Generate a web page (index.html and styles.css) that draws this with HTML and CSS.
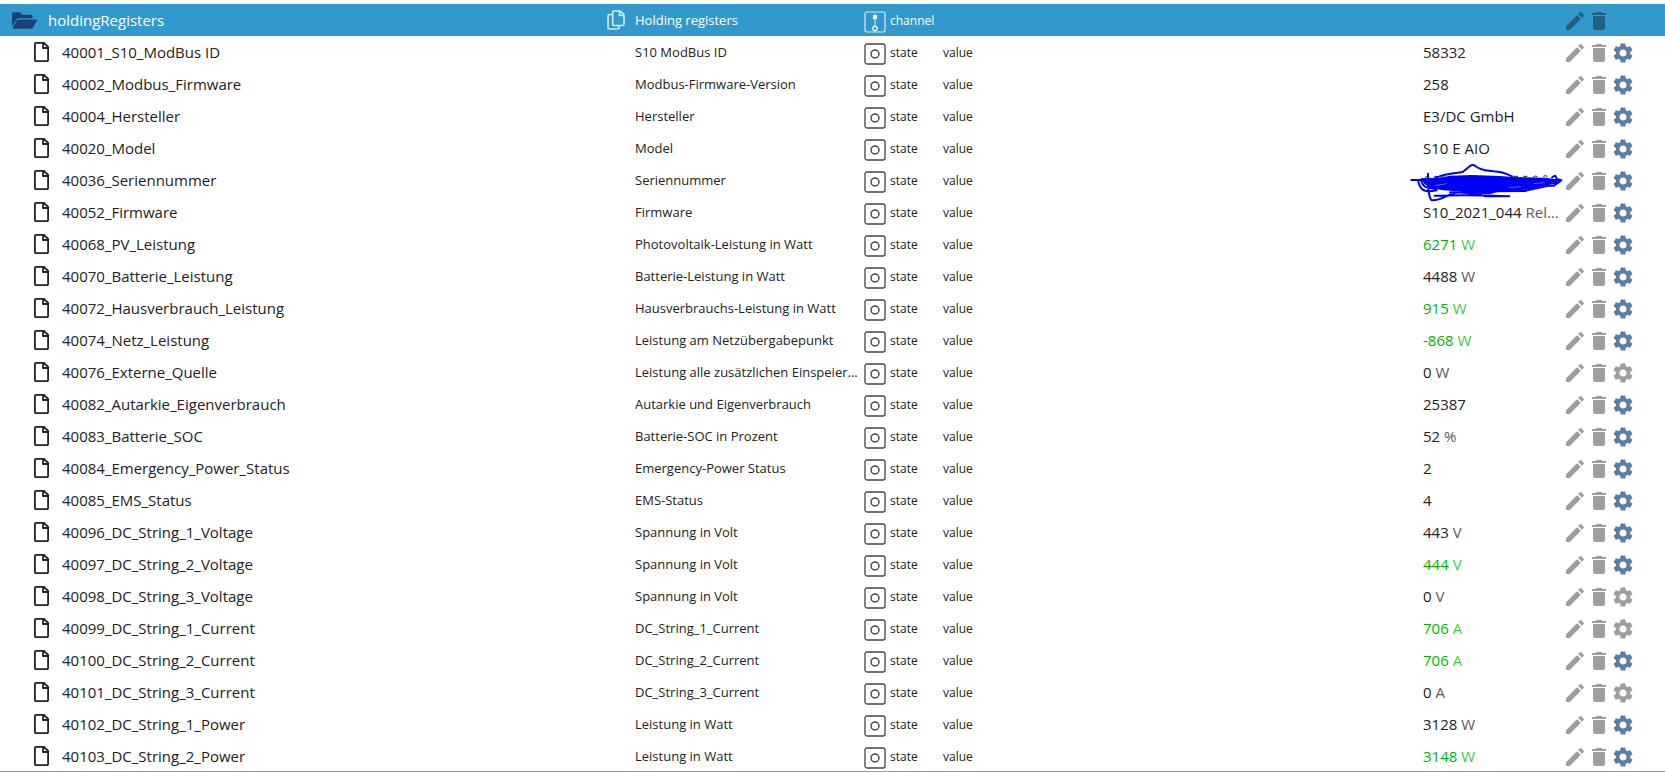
FILE: index.html
```html
<!DOCTYPE html>
<html lang="de">
<head>
<meta charset="utf-8">
<title>holdingRegisters</title>
<link rel="stylesheet" href="styles.css">
</head>
<body>
<svg class="sprite" aria-hidden="true">
  <symbol id="edit" viewBox="0 0 24 24"><path d="M3 17.25V21h3.75L17.81 9.94l-3.75-3.75L3 17.25zM20.71 7.04c.39-.39.39-1.02 0-1.41l-2.34-2.34a.9959.9959 0 0 0-1.41 0l-1.83 1.83 3.75 3.75 1.83-1.83z"/></symbol>
  <symbol id="trash" viewBox="0 0 24 24"><path d="M6 19c0 1.1.9 2 2 2h8c1.1 0 2-.9 2-2V7H6v12zM19 4h-3.5l-1-1h-5l-1 1H5v2h14V4z"/></symbol>
  <symbol id="gear" viewBox="0 0 24 24"><path d="M19.14 12.94c.04-.3.06-.61.06-.94 0-.32-.02-.64-.07-.94l2.03-1.58c.18-.14.23-.41.12-.61l-1.92-3.32c-.12-.22-.37-.29-.59-.22l-2.39.96c-.5-.38-1.03-.7-1.62-.94l-.36-2.54c-.04-.24-.24-.41-.48-.41h-3.84c-.24 0-.43.17-.47.41l-.36 2.54c-.59.24-1.13.57-1.62.94l-2.39-.96c-.22-.08-.47 0-.59.22L2.74 8.87c-.12.21-.08.47.12.61l2.03 1.58c-.05.3-.09.63-.09.94s.02.64.07.94l-2.03 1.58c-.18.14-.23.41-.12.61l1.92 3.32c.12.22.37.29.59.22l2.39-.96c.5.38 1.03.7 1.62.94l.36 2.54c.05.24.24.41.48.41h3.84c.24 0 .44-.17.47-.41l.36-2.54c.59-.24 1.13-.56 1.62-.94l2.39.96c.22.08.47 0 .59-.22l1.92-3.32c.12-.22.07-.47-.12-.61l-2.01-1.58zM12 15.6c-1.98 0-3.6-1.62-3.6-3.6s1.62-3.6 3.6-3.6 3.6 1.62 3.6 3.6-1.62 3.6-3.6 3.6z"/></symbol>
  <symbol id="file" viewBox="0 0 15 20"><path d="M2 .9H10L14.100 5V18a1.100 1.100 0 0 1-1.100 1.100H2A1.100 1.100 0 0 1 .9 18V2A1.100 1.100 0 0 1 2 .9zM9 1v5H14" fill="none" stroke="currentColor" stroke-width="1.8" stroke-linejoin="round"/></symbol>
  <symbol id="state" viewBox="0 0 22 22"><rect x="1" y="1" width="20" height="20" rx="2" fill="none" stroke="currentColor" stroke-width="1.3"/><circle cx="11" cy="11" r="4" fill="none" stroke="currentColor" stroke-width="1.4"/></symbol>
  <symbol id="channel" viewBox="0 0 22 22"><rect x="1" y="1" width="20" height="20" rx="2" fill="none" stroke="currentColor" stroke-width="1.2"/><rect x="9" y="4" width="4" height="4" fill="#fff"/><path d="M11 2.500v13" stroke="currentColor" stroke-width="1"/><circle cx="11" cy="17.500" r="2.200" fill="none" stroke="#fff" stroke-width="1.200"/></symbol>
  <symbol id="folder" viewBox="0 0 25 17"><path d="M1.500.3h6.700l2.400 2.400h8.300c.9 0 1.600.7 1.600 1.600v1.900H7.200c-1.300 0-2.400.7-3.100 1.800L0 14.300V1.800C0 .9.600.3 1.500.3z"/><path d="M7.200 7.400h16.900c.7 0 1.100.7.800 1.300l-4 7c-.4.700-.9 1-1.700 1H1.300c-.7 0-1.100-.7-.7-1.300l4.100-6.700c.5-.9 1.400-1.300 2.500-1.300z"/></symbol>
  <symbol id="copy" viewBox="0 0 18 20"><path d="M7 1h6.200L17 4.800v9.400a1.300 1.300 0 0 1-1.300 1.300H7a1.300 1.300 0 0 1-1.300-1.300V2.300A1.300 1.300 0 0 1 7 1zM12.500 1v4.500H17M5.700 4.500H2.300A1.300 1.300 0 0 0 1 5.800v11.900A1.300 1.300 0 0 0 2.300 19h8.400a1.300 1.300 0 0 0 1.300-1.300v-2.200" fill="none" stroke="currentColor" stroke-width="1.600" stroke-linejoin="round"/></symbol>
  <symbol id="scribble" viewBox="0 0 510 150">
    <path d="M74 68q6-6 14-2M102 66q6-5 12 0M122 67q8-4 16 1M340 64h14M370 64h12M400 65q6-4 12 0M430 64q6-4 12 0M458 64q6-4 12 0" fill="none" stroke="#222" stroke-width="3"/>
    <g fill="none" stroke="#0000f5" stroke-width="6" stroke-linecap="round" stroke-linejoin="round">
      <path d="M34 75H484M84 56V75C82 105 90 135 96 136C125 138 140 117 170 113S300 108 378 108M55 80C62 110 78 112 110 106M64 78C70 98 84 102 110 100M100 74C120 56 160 56 188 51L210 33Q218 27 226 33C244 48 260 46 280 49Q310 51 336 64M104 122C180 120 280 122 328 124H258C230 116 190 112 150 112M456 68Q468 56 470 72L484 76L462 92H444L382 106"/>
    </g>
    <path d="M62 70L120 68L150 62L215 60L300 63L336 66L440 68L476 76L470 86L430 92L384 104L300 109L270 118L230 116L190 110L130 106L92 99L74 88Z" fill="#0000f5"/>
    <path d="M104 92l36-6M400 86l34-3M326 98l36-3" stroke="#8a8aff" stroke-width="2"/>
  </symbol>
</svg>
<main class="browser">
  <table class="objects">
    <colgroup><col><col class="col-desc"><col class="col-type"><col class="col-role"><col class="col-value"><col class="col-actions"></colgroup>
    <thead>
      <tr class="folder-row">
        <th class="name" scope="col"><span class="line"><svg class="icon-folder"><use href="#folder"/></svg>holdingRegisters</span></th>
        <th class="desc" scope="col"><span class="line"><button class="copy" aria-label="Kopieren"><svg class="icon-copy"><use href="#copy"/></svg></button>Holding registers</span></th>
        <th class="type" scope="col"><span class="line"><svg class="icon-type"><use href="#channel"/></svg>channel</span></th>
        <td></td>
        <td></td>
        <td class="actions"><span class="line"><button aria-label="Bearbeiten"><svg><use href="#edit"/></svg></button><button aria-label="Löschen"><svg><use href="#trash"/></svg></button></span></td>
      </tr>
    </thead>
    <tbody id="rows"></tbody>
  </table>
</main>
<script src="objects.js"></script>
</body>
</html>
```
FILE: styles.css
```css
* { box-sizing: border-box; }

body {
  margin: 0;
  background: #fff;
  color: #222;
  font-family: "Open Sans", "Noto Sans", sans-serif;
}

.sprite { position: absolute; width: 0; height: 0; }

.browser {
  height: calc(100vh - 1px);
  padding-top: 4px;
  overflow: hidden;
  border-bottom: 1px solid #a0a0a0;
}

.objects {
  width: 100%;
  table-layout: fixed;
  border-collapse: collapse;
  font-size: 15px;
  line-height: 32px;
}

.col-desc { width: 258px; }
.col-type { width: 80px; }
.col-role { width: 480px; }
.col-value { width: 140px; }
.col-actions { width: 102px; }

th, td {
  height: 32px;
  padding: 0;
  text-align: left;
  font-weight: 400;
  white-space: nowrap;
}

.line { display: flex; align-items: center; height: 32px; }

svg { display: block; flex: none; fill: currentColor; }

.name .line { padding-left: 34px; gap: 13px; }
.desc { font-size: 13px; }
.desc .text { padding-left: 30px; }
.type, .role { font-size: 12px; }
.type .line, .role .line { padding-top: 2px; }
.type .line { padding-left: 1px; gap: 4px; }

.value { position: relative; }
.unit { opacity: .75; }
.changed { color: #00b400; }
.scribble {
  position: absolute;
  left: -23px;
  top: -9px;
  width: 170px;
  height: 50px;
}

.icon-file { width: 15px; height: 20px; color: #222; }
.icon-folder { width: 25px; height: 17px; color: #164477; }
.icon-copy { width: 18px; height: 20px; }
.icon-type { width: 22px; height: 22px; margin-top: 2px; color: #444; }

button {
  padding: 0;
  border: 0;
  background: none;
  color: inherit;
  cursor: pointer;
}

.actions .line { padding-top: 2px; color: #9e9e9e; }
.actions svg { width: 24px; height: 24px; }
.actions .active { color: #5a7ea6; }

.folder-row { background: #3399cc; color: #fff; }
.folder-row .name .line { padding-left: 12px; gap: 11px; }
.folder-row .copy { width: 30px; padding-left: 2px; color: #d6ebf5; }
.folder-row .icon-type { color: #d6ebf5; }
.folder-row .actions .line { color: #23607f; }
```
FILE: objects.js
```javascript
// id, description, value, unit, changed, custom settings enabled
const objects = [
  ["40001_S10_ModBus ID", "S10 ModBus ID", "58332", "", false, true],
  ["40002_Modbus_Firmware", "Modbus-Firmware-Version", "258", "", false, true],
  ["40004_Hersteller", "Hersteller", "E3/DC GmbH", "", false, true],
  ["40020_Model", "Model", "S10 E AIO", "", false, true],
  ["40036_Seriennummer", "Seriennummer", null, "", false, true],
  ["40052_Firmware", "Firmware", "S10_2021_044", "Rel...", false, true],
  ["40068_PV_Leistung", "Photovoltaik-Leistung in Watt", "6271", "W", true, true],
  ["40070_Batterie_Leistung", "Batterie-Leistung in Watt", "4488", "W", false, true],
  ["40072_Hausverbrauch_Leistung", "Hausverbrauchs-Leistung in Watt", "915", "W", true, true],
  ["40074_Netz_Leistung", "Leistung am Netzübergabepunkt", "-868", "W", true, true],
  ["40076_Externe_Quelle", "Leistung alle zusätzlichen Einspeier...", "0", "W", false, false],
  ["40082_Autarkie_Eigenverbrauch", "Autarkie und Eigenverbrauch", "25387", "", false, true],
  ["40083_Batterie_SOC", "Batterie-SOC in Prozent", "52", "%", false, true],
  ["40084_Emergency_Power_Status", "Emergency-Power Status", "2", "", false, true],
  ["40085_EMS_Status", "EMS-Status", "4", "", false, true],
  ["40096_DC_String_1_Voltage", "Spannung in Volt", "443", "V", false, true],
  ["40097_DC_String_2_Voltage", "Spannung in Volt", "444", "V", true, true],
  ["40098_DC_String_3_Voltage", "Spannung in Volt", "0", "V", false, false],
  ["40099_DC_String_1_Current", "DC_String_1_Current", "706", "A", true, false],
  ["40100_DC_String_2_Current", "DC_String_2_Current", "706", "A", true, true],
  ["40101_DC_String_3_Current", "DC_String_3_Current", "0", "A", false, false],
  ["40102_DC_String_1_Power", "Leistung in Watt", "3128", "W", false, true],
  ["40103_DC_String_2_Power", "Leistung in Watt", "3148", "W", true, true]
];

const icon = (name, cls = "") => `<svg class="${cls}"><use href="#${name}"/></svg>`;

const valueCell = (value, unit, changed) => {
  if (value === null) return icon("scribble", "scribble");
  const suffix = unit ? ` <span class="unit">${unit}</span>` : "";
  return `<span class="text${changed ? " changed" : ""}">${value}${suffix}</span>`;
};

document.getElementById("rows").innerHTML = objects.map(([id, desc, value, unit, changed, active]) => `
  <tr>
    <td class="name"><span class="line">${icon("file", "icon-file")}${id}</span></td>
    <td class="desc"><span class="text">${desc}</span></td>
    <td class="type"><span class="line">${icon("state", "icon-type")}state</span></td>
    <td class="role"><span class="line">value</span></td>
    <td class="value">${valueCell(value, unit, changed)}</td>
    <td class="actions"><span class="line">
      <button aria-label="Bearbeiten">${icon("edit")}</button>
      <button aria-label="Löschen">${icon("trash")}</button>
      <button aria-label="Einstellungen" class="${active ? "active" : ""}">${icon("gear")}</button>
    </span></td>
  </tr>`).join("");
```
